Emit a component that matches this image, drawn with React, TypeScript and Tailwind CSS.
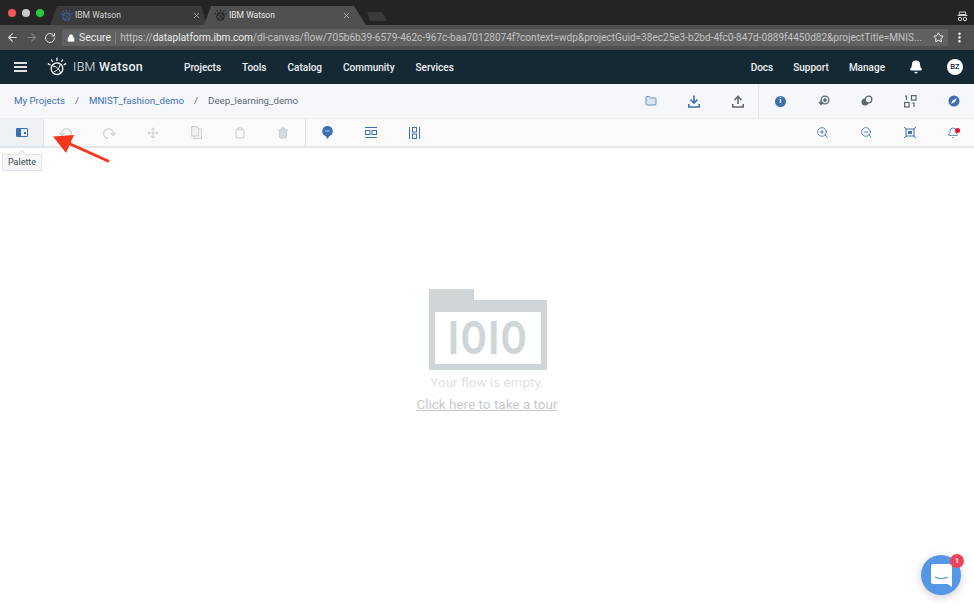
import {
  ArrowLeft,
  ArrowRight,
  Bell,
  EllipsisVertical,
  Folder,
  Lock,
  Move,
  Clipboard,
  RotateCw,
  Star,
  Trash,
  X,
  ZoomIn,
  ZoomOut,
} from "lucide-react";
import type { ReactNode } from "react";

const WatsonLogo = ({ size, color }: { size: number; color: string }) => (
  <svg width={size} height={size} viewBox="0 0 24 24" fill="none" stroke={color} strokeWidth="1.6">
    <circle cx="12" cy="14" r="7" />
    <path d="M7 11c4 0 8 3 9 8M8 18c3-1 7-4 8-9" strokeWidth="1.2" />
    <path d="M12 1v3.5M5 3l2 3M19 3l-2 3M1 8l3 1.5M23 8l-3 1.5" />
  </svg>
);

function Tab({ active, color, title }: { active?: boolean; color: string; title: string }) {
  return (
    <div
      className={
        active
          ? "-ml-[3px] flex h-[19px] w-[162px] items-center bg-[#505050] pl-[10px] pr-[15px] text-[#e8e8e8] [clip-path:polygon(0_100%,7px_0,150px_0,100%_100%)]"
          : "flex h-[19px] w-[157px] items-center bg-[#3a3a3a] pl-[10px] pr-[6px] text-[#d5d5d5] [clip-path:polygon(0_100%,7px_0,151px_0,100%_100%)]"
      }
    >
      <WatsonLogo size={13} color={color} />
      <span className="ml-[2px] text-[8.5px]">{title}</span>
      <X className="ml-auto text-[#bbbbbb]" size={9} strokeWidth={2} />
    </div>
  );
}

function Cell({ children }: { children: ReactNode }) {
  return <div className="flex h-full w-[43.5px] shrink-0 items-center justify-center">{children}</div>;
}

const Pin = () => (
  <svg width="11" height="13" viewBox="0 0 11 13">
    <path d="M5.500 0a5.200 5.200 0 0 1 2 10l-2 3-2-3a5.200 5.200 0 0 1 2-10z" fill="#3d70b2" />
    <path d="M3 5h5" stroke="#a9c1e0" strokeWidth="1" />
  </svg>
);

const QrScan = () => (
  <svg width="13" height="13" viewBox="0 0 13 13" fill="none" stroke="#5a6872" strokeWidth="1.2">
    <rect x="7.500" y=".6" width="4.500" height="4.500" />
    <path d="M2.500 .6v4.500M1 1.200h1.500" />
    <rect x=".6" y="7.500" width="4.500" height="4.500" />
    <path d="M10 7.500v4.500M8.500 8.100H10" />
  </svg>
);

const Arrow = ({ up, color }: { up?: boolean; color: string }) => (
  <svg width="12" height="13" viewBox="0 0 12 13" fill="none" stroke={color} strokeWidth="1.600">
    <path d={up ? "M6 9V1.500M2.500 5L6 1.500 9.500 5" : "M6 .5V8M2.500 4.500L6 8l3.500-3.500"} />
    <path d="M.8 9v3h10.400V9" />
  </svg>
);

const Undo = ({ flip }: { flip?: boolean }) => (
  <svg
    className={flip ? "-scale-x-100" : ""}
    width="13"
    height="12"
    viewBox="0 0 13 12"
    fill="none"
    stroke="#d0d4d7"
    strokeWidth="1.300"
  >
    <path d="M3 8a4.800 4.800 0 1 1 5 3.400" />
    <path d="M.5 5.800L3 8.500l2.500-2.700" />
  </svg>
);

export default function App() {
  return (
    <div className="relative flex h-[608px] w-[974px] flex-col overflow-hidden bg-white font-['Roboto',sans-serif]">
      {/* browser tabs */}
      <div className="flex h-[25px] shrink-0 items-end bg-[#242424] pl-[50px]">
        <div className="absolute left-[8px] top-[9px] flex gap-[6px]">
          <span className="h-[8px] w-[8px] rounded-full bg-[#f2555a]" />
          <span className="h-[8px] w-[8px] rounded-full bg-[#c9c9c9]" />
          <span className="h-[8px] w-[8px] rounded-full bg-[#25c93f]" />
        </div>
        <Tab color="#3d70b2" title="IBM Watson" />
        <Tab active color="#111111" title="IBM Watson" />
        <div className="mb-[4px] ml-[1px] h-[9px] w-[20px] bg-[#3a3a3a] [clip-path:polygon(0_0,75%_0,100%_100%,15%_100%)]" />
        <svg className="mb-[3px] ml-auto mr-[6px]" width="11" height="11" viewBox="0 0 11 11" fill="none" stroke="#cfcfcf">
          <path d="M2.500 1h6l.5 2.500H2zM.5 4.500h10" />
          <circle cx="3" cy="8" r="1.700" />
          <circle cx="8" cy="8" r="1.700" />
        </svg>
      </div>

      {/* address bar */}
      <div className="flex h-[25px] shrink-0 items-center bg-[#505050] text-[#dddddd]">
        <ArrowLeft className="ml-[6px]" size={13} strokeWidth={2} />
        <ArrowRight className="ml-[6px] text-[#858585]" size={13} strokeWidth={2} />
        <RotateCw className="ml-[6px]" size={12} strokeWidth={2} />
        <div className="ml-[6px] flex h-[17px] w-[886px] items-center rounded-[2px] bg-[#616161] pl-[5px] pr-[4px] text-[10.500px]">
          <Lock className="fill-white text-white" size={8} strokeWidth={2} />
          <span className="ml-[4px] text-[#eeeeee]">Secure</span>
          <span className="mx-[4px] h-[12px] w-px bg-[#808080]" />
          <span className="whitespace-nowrap text-[10.05px] text-[#c4c4c4]">
            https://<span className="text-[#eeeeee]">dataplatform.ibm.com</span>
            /dl-canvas/flow/705b6b39-6579-462c-967c-baa70128074f?context=wdp&projectGuid=38ec25e3-b2bd-4fc0-847d-0889f4450d82&projectTitle=MNIS...
          </span>
          <Star className="ml-auto shrink-0 text-white" size={11} strokeWidth={2} />
        </div>
        <EllipsisVertical className="ml-[5px] text-white" size={13} strokeWidth={2.500} />
      </div>

      {/* watson nav */}
      <div className="flex h-[34px] shrink-0 items-center bg-[#152935] text-[10px] font-medium text-[#eef1f3]">
        <div className="ml-[14px] flex w-[13px] flex-col gap-[2.500px]">
          <span className="h-[1.500px] bg-[#dfe3e6]" />
          <span className="h-[1.500px] bg-[#dfe3e6]" />
          <span className="h-[1.500px] bg-[#dfe3e6]" />
        </div>
        <div className="ml-[20px]">
          <WatsonLogo size={20} color="#ffffff" />
        </div>
        <span className="ml-[6px] w-[111px] text-[12.500px] font-light tracking-[0.3px]">
          IBM <span className="font-medium">Watson</span>
        </span>
        <div className="flex gap-[21px] pt-[1px]">
          <span>Projects</span>
          <span>Tools</span>
          <span>Catalog</span>
          <span>Community</span>
          <span>Services</span>
        </div>
        <div className="ml-auto flex items-center gap-[20px] pt-[1px]">
          <span>Docs</span>
          <span>Support</span>
          <span>Manage</span>
        </div>
        <Bell className="ml-[24px] fill-white text-white" size={14} />
        <div className="ml-[24px] mr-[11px] flex h-[16px] w-[16px] items-center justify-center rounded-full bg-white text-[7.500px] text-[#152935]">
          BZ
        </div>
      </div>

      {/* breadcrumb */}
      <div className="flex h-[34px] shrink-0 items-center bg-[#f5f7fa] text-[9.7px] text-[#5a6872]">
        <div className="flex items-center pl-[14px] pt-[1px]">
          <span className="text-[#3d70b2]">My Projects</span>
          <span className="mx-[10px]">/</span>
          <span className="text-[#3d70b2]">MNIST_fashion_demo</span>
          <span className="mx-[10px]">/</span>
          <span>Deep_learning_demo</span>
        </div>
        <div className="-mr-[2px] ml-auto flex h-full items-center">
          <Cell>
            <Folder className="fill-[#dbe5f2] text-[#3d70b2]" size={12} strokeWidth={1.500} />
          </Cell>
          <Cell>
            <Arrow color="#3d70b2" />
          </Cell>
          <Cell>
            <Arrow up color="#5a6872" />
          </Cell>
          <div className="-ml-[2px] h-full w-px bg-[#e4e7ea]" />
          <Cell>
            <div className="flex h-[11px] w-[11px] items-center justify-center rounded-full bg-[#3d70b2] text-[8px] font-bold leading-none text-white">
              i
            </div>
          </Cell>
          <Cell>
            <svg width="12" height="12" viewBox="0 0 12 12" fill="none" stroke="#5a6872" strokeWidth="1.300">
              <circle cx="7" cy="5" r="3.800" />
              <circle cx="7" cy="5" r="1.200" fill="#5a6872" />
              <path d="M1 7l2 2.500L5 7M3 5v4.500" />
            </svg>
          </Cell>
          <Cell>
            <svg width="12" height="12" viewBox="0 0 12 12" fill="#5a6872">
              <circle cx="4" cy="7" r="3.500" />
              <circle cx="7.500" cy="4.500" r="3.300" fill="#f5f7fa" stroke="#5a6872" strokeWidth="1.300" />
            </svg>
          </Cell>
          <Cell>
            <QrScan />
          </Cell>
          <Cell>
            <svg width="12" height="12" viewBox="0 0 12 12">
              <circle cx="6" cy="6" r="5.500" fill="#3d70b2" />
              <path d="M3 9l1.500-3.500L9 3 7 7z" fill="#f5f7fa" />
            </svg>
          </Cell>
        </div>
      </div>

      {/* toolbar */}
      <div className="flex h-[30px] shrink-0 items-center border-b-2 border-t border-b-[#e4e7ea] border-t-[#eceef0] bg-[#fafafa] text-[#c9ced2]">
        <div className="flex h-full w-[44px] shrink-0 items-center justify-center border-r border-[#dfe3e6] bg-[#eff2f5]">
          <div className="flex h-[9px] w-[12px] items-center justify-end rounded-[1px] border-[1.500px] border-l-[5px] border-[#3d70b2] pr-[1px]">
            <span className="h-[2px] w-[2px] bg-[#3d70b2]" />
          </div>
        </div>
        <Cell>
          <Undo />
        </Cell>
        <Cell>
          <Undo flip />
        </Cell>
        <Cell>
          <Move size={12} />
        </Cell>
        <Cell>
          <svg width="11" height="13" viewBox="0 0 11 13" fill="none" stroke="#ccd1d5" strokeWidth="1.200">
            <path d="M.6 .6h5l2 2V10H.6z" fill="#eef0f2" />
            <path d="M7.500 3h3v9.400H3.500V10" />
          </svg>
        </Cell>
        <Cell>
          <Clipboard size={12} />
        </Cell>
        <Cell>
          <Trash className="fill-[#d8dcdf]" size={12} />
        </Cell>
        <div className="h-full w-px bg-[#dfe3e6]" />
        <Cell>
          <Pin />
        </Cell>
        <Cell>
          <svg width="12" height="11" viewBox="0 0 12 11" fill="none" stroke="#3d70b2">
            <path d="M0 .5h12M0 10.500h12" />
            <rect x=".5" y="3.500" width="4.500" height="4" />
            <rect x="7" y="3.500" width="4.500" height="4" />
          </svg>
        </Cell>
        <Cell>
          <svg width="11" height="12" viewBox="0 0 11 12" fill="none" stroke="#3d70b2">
            <path d="M.5 0v12M10.500 0v12" />
            <rect x="3.500" y=".5" width="4" height="4.500" />
            <rect x="3.500" y="7" width="4" height="4.500" />
          </svg>
        </Cell>
        <div className="-mr-[1px] ml-auto flex h-full items-center text-[#3d70b2]">
          <Cell>
            <ZoomIn size={13} strokeWidth={1.500} />
          </Cell>
          <Cell>
            <ZoomOut size={13} strokeWidth={1.500} />
          </Cell>
          <Cell>
            <svg width="12" height="11" viewBox="0 0 12 11" fill="none" stroke="#3d70b2">
              <path d="M0 0l2.500 2M12 0L9.500 2M0 11l2.500-2M12 11L9.500 9" />
              <rect x="2" y="2" width="8" height="7" />
              <rect x="4" y="4" width="4" height="3" fill="#3d70b2" stroke="none" />
            </svg>
          </Cell>
          <Cell>
            <div className="relative">
              <Bell size={12} strokeWidth={1.500} />
              <span className="absolute -right-[1px] top-[1px] h-[5px] w-[5px] rounded-full bg-[#e8102a]" />
            </div>
          </Cell>
        </div>
      </div>

      {/* flow canvas */}
      <div className="relative flex flex-1 flex-col items-center bg-white pt-[141px]">
        <div className="ml-[429px] h-[11px] w-[45px] self-start bg-[#d0d5d8]" />
        <div className="ml-[429px] flex h-[70px] w-[118px] self-start bg-[#d0d5d8] px-[6px] pb-[6px] pt-[12px]">
          <div className="flex h-full w-full items-center justify-center bg-white">
            <span className="scale-x-[0.8] text-[47px] font-bold leading-[52px] tracking-[2px] text-[#d0d5d8]">IOIO</span>
          </div>
        </div>
        <p className="mt-[3px] text-[13.500px] leading-[18px] text-[#dfe3e6]">Your flow is empty.</p>
        <a className="mt-[3px] text-[13.500px] leading-[20px] text-[#c4cace] underline">Click here to take a tour</a>

        {/* palette tooltip */}
        <div className="absolute left-[2px] top-[6px] flex h-[17px] w-[40px] items-center justify-center border border-[#dfe3e6] bg-[#f5f7fa] text-[9px] text-[#3d4a52]">
          Palette
          <span className="absolute -top-[4px] left-[16px] h-[6px] w-[6px] rotate-45 border-l border-t border-[#dfe3e6] bg-[#f5f7fa]" />
        </div>

        {/* annotation arrow */}
        <svg className="absolute -top-[14px] left-[50px]" width="64" height="32" viewBox="0 0 64 32">
          <path d="M59 27.500L18 9" stroke="#f6361c" strokeWidth="3" />
          <path d="M3 2.500L24 1l-8 18z" fill="#f6361c" />
        </svg>

        {/* chat launcher */}
        <div className="absolute left-[921px] top-[407px] flex h-[40px] w-[40px] items-center justify-center rounded-full bg-[#5596e6] shadow-[0_2px_10px_rgba(0,0,0,0.2)]">
          <svg width="21" height="23" viewBox="0 0 21 23">
            <path d="M2.500 0h16a2.500 2.500 0 0 1 2.500 2.500V23l-4.500-3H2.500A2.500 2.500 0 0 1 0 17.500v-15A2.500 2.500 0 0 1 2.500 0z" fill="#fff" />
            <path d="M4 13c3.500 2 9.500 2 13 0" fill="none" stroke="#5596e6" strokeWidth="1.200" />
          </svg>
          <span className="absolute -right-[3px] -top-[1px] flex h-[14px] w-[14px] items-center justify-center rounded-full bg-[#f0405a] text-[8px] font-bold text-white">
            1
          </span>
        </div>
      </div>
    </div>
  );
}
